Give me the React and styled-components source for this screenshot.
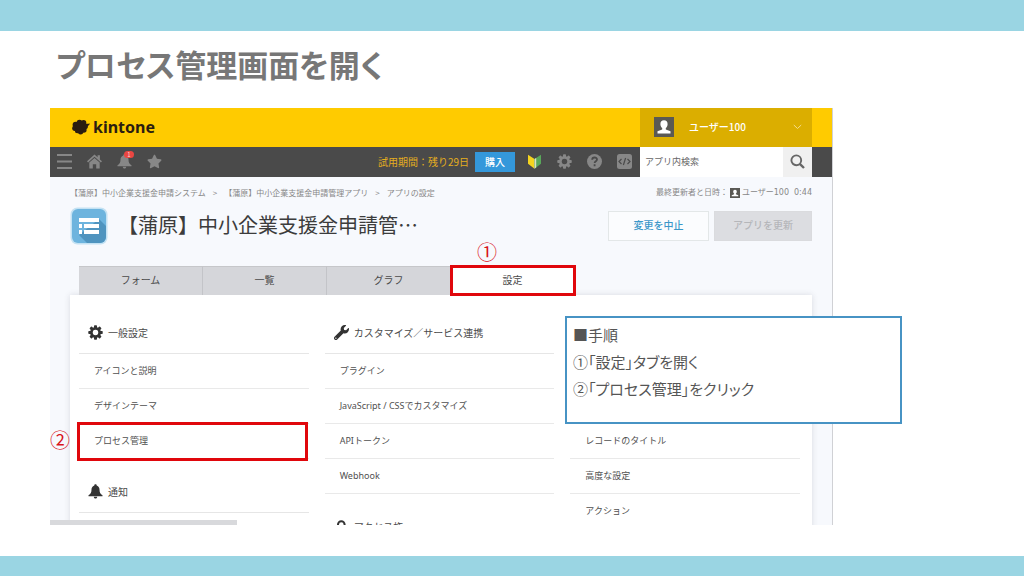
import React from "react";
import styled, { createGlobalStyle, css } from "styled-components";
import { FaStar, FaWrench } from "react-icons/fa";

const GlobalStyle = createGlobalStyle`
  * { box-sizing: border-box; }
  body { margin: 0; background: #fff; color: #4a4a4a; font-family: "Noto Sans CJK JP", sans-serif; }
  button, input { font-family: inherit; }
  h1, h2, h3, p, ul { margin: 0; padding: 0; }
  ul { list-style: none; }
  a { color: inherit; text-decoration: none; }
  svg { display: block; flex: none; }
`;

const Slide = styled.main`
  display: flex;
  flex-direction: column;
  height: 100vh;
  overflow: hidden;
`;
const Band = styled.div`
  flex: none;
  height: ${(p) => p.$size}px;
  background: #9ad5e3;
`;
const SlideTitle = styled.h1`
  flex: none;
  padding: 8px 56px 19px;
  font-size: 31px;
  line-height: 50px;
  font-weight: 700;
  font-feature-settings: "palt";
  color: #777;
`;
const Stage = styled.section`
  position: relative;
  flex: 1;
  min-height: 0;
  margin: 0 191px 31px 50px;
`;
const Shot = styled.div`
  position: relative;
  display: flex;
  flex-direction: column;
  height: 100%;
  overflow: hidden;
  background: #f7f9fd;
  border-right: 1px solid #d0d1d5;
`;

const Brand = styled.header`
  display: flex;
  flex: none;
  align-items: center;
  height: 39px;
  padding: 0 20px 0 22px;
  background: #ffcb00;
`;
const Logo = styled.a`
  display: flex;
  align-items: center;
  gap: 3px;
  margin-right: auto;
  padding-bottom: 1px;
  font: 700 16px/20px "Noto Sans", sans-serif;
  color: #2b1d10;
`;
const UserMenu = styled.button`
  display: flex;
  align-items: center;
  width: 172px;
  height: 39px;
  padding: 0 10px 2px 14px;
  border: 0;
  background: #dbae00;
  color: #fff;
  font-size: 10px;
  font-weight: 500;
  text-align: left;
  span { flex: 1; padding-left: 15px; }
`;

const Nav = styled.nav`
  display: flex;
  flex: none;
  align-items: center;
  height: 30px;
  padding: 0 20px 0 7px;
  background: #4a4a4a;
`;
const IconGroup = styled.div`
  display: flex;
  align-items: center;
  gap: 15px;
  margin-right: ${(p) => (p.$push ? "auto" : "8px")};
`;
const IconButton = styled.button`
  position: relative;
  display: grid;
  place-items: center;
  width: 15px;
  height: 20px;
  padding: 0 0 1px;
  border: 0;
  background: none;
  color: #878787;
`;
const Badge = styled.span`
  position: absolute;
  top: -1px;
  right: -2px;
  width: 10px;
  height: 7px;
  border-radius: 4px;
  background: #ea4642;
  color: #ffd9d5;
  font-size: 6px;
  line-height: 7px;
  text-align: center;
`;
const Trial = styled.span`
  padding-bottom: 2px;
  font-size: 10px;
  color: #e5ae1e;
`;
const BuyButton = styled.button`
  width: 40px;
  height: 20px;
  margin: 0 12px 0 6px;
  padding: 0 0 1px;
  border: 0;
  background: #3498db;
  color: #fff;
  font-size: 10px;
  font-weight: 500;
`;
const Search = styled.form`
  display: flex;
  width: 172px;
  height: 30px;
  input {
    flex: 1;
    min-width: 0;
    padding: 0 5px 2px;
    border: 0;
    border-radius: 0;
    background: #fff;
    font-size: 9px;
  }
  input::placeholder { color: #666; opacity: 1; }
  button {
    display: grid;
    place-items: center;
    width: 29px;
    padding: 0 0 1px;
    border: 0;
    background: #f0f0f0;
    color: #666;
  }
`;

const Page = styled.div`
  display: flex;
  flex: 1;
  flex-direction: column;
  min-height: 0;
  padding: 10px 20px 0;
`;
const MetaRow = styled.div`
  display: flex;
  flex: none;
  justify-content: space-between;
  height: 12px;
  font-size: 8px;
  line-height: 12px;
  color: #888;
`;
const Crumbs = styled.nav`
  display: flex;
  gap: 7px;
`;
const Updated = styled.div`
  display: flex;
  align-items: center;
  gap: 2px;
  font-family: "DejaVu Sans", "Noto Sans CJK JP", sans-serif;
  time { margin-left: 3px; }
`;
const AppHead = styled.div`
  display: flex;
  flex: none;
  align-items: center;
  height: 38px;
  margin: 8px 0 21px;
`;
const AppName = styled.h2`
  flex: 1;
  padding: 0 0 3px 10px;
  font-size: 20px;
  line-height: 34px;
  font-weight: 400;
  color: #3c3c3c;
`;
const ActionButton = styled.button`
  width: ${(p) => (p.$muted ? 98 : 101)}px;
  height: 30px;
  margin-left: 5px;
  padding: 0 0 3px;
  border: 1px solid ${(p) => (p.$muted ? "#dadbde" : "#e3e7e8")};
  background: ${(p) => (p.$muted ? "#dcdde1" : "#fbfcfe")};
  color: ${(p) => (p.$muted ? "#b5b6ba" : "#3a97c9")};
  font-size: 10px;
  font-weight: 500;
`;

const callout = css`
  &::after {
    content: "";
    position: absolute;
    inset: ${(p) => p.$inset};
    border: 3px solid #e0070c;
    pointer-events: none;
  }
`;
const Marker = styled.span`
  position: absolute;
  left: ${(p) => p.$left}px;
  top: ${(p) => p.$top}px;
  color: #d8141b;
  font-size: 20px;
  line-height: 24px;
  font-weight: 400;
`;
const Tabs = styled.div`
  position: relative;
  z-index: 1;
  display: flex;
  flex: none;
  height: 29px;
  padding-left: 9px;
`;
const Tab = styled.button`
  position: relative;
  width: 124px;
  padding: 0 0 3px;
  border: 0;
  border-top: 1px solid #c6c7ca;
  border-right: 1px solid #c3c4c8;
  background: ${(p) => (p.$active ? "#fff" : "#d5d6da")};
  color: #4a4a4a;
  font-size: 10px;
  ${(p) => p.$active && callout}
`;
const Panel = styled.div`
  display: grid;
  flex: 1;
  grid-template-columns: repeat(3, 1fr);
  gap: 16px;
  padding: 16px 12px 0 9px;
  background: #fff;
  box-shadow: 0 0 6px rgba(60, 64, 80, 0.16);
`;
const Group = styled.section`
  margin-bottom: 11px;
`;
const GroupTitle = styled.h3`
  display: flex;
  align-items: center;
  gap: 5px;
  height: 43px;
  padding-left: 9px;
  border-bottom: 1px solid #e6e6e6;
  font-size: 10px;
  font-weight: 400;
  color: #4a4a4a;
  svg { color: #333; }
`;
const Item = styled.li`
  position: relative;
  height: 35px;
  padding-left: 15px;
  border-bottom: 1px solid #e9e9e9;
  font: 400 9px/34px "Noto Sans", "Noto Sans CJK JP", sans-serif;
  color: #505050;
  ${(p) => p.$marked && callout}
`;
const StatusBar = styled.div`
  position: absolute;
  left: 0;
  bottom: 0;
  width: 187px;
  height: 5px;
  background: #d8d9dc;
`;
const Note = styled.aside`
  position: absolute;
  top: 208px;
  right: -69px;
  width: 337px;
  height: 108px;
  padding: 3px 6px;
  border: 2px solid #4793c4;
  background: #fff;
  color: #555;
  font-size: 15px;
  line-height: 27px;
  font-feature-settings: "palt";
`;

const Gear = ({ size = 15 }) => (
  <svg width={size} height={size} viewBox="0 0 16 16" fill="currentColor" aria-hidden="true">
    {[0, 45, 90, 135].map((a) => (
      <rect key={a} x="6.4" y="0.3" width="3.2" height="15.4" rx="0.8" transform={`rotate(${a} 8 8)`} mask="url(#hub)" />
    ))}
    <mask id="hub" maskUnits="userSpaceOnUse" x="-4" y="-4" width="24" height="24">
      <path d="M-4-4h24v24h-24z" fill="#fff" />
      <circle cx="8" cy="8" r="3.2" fill="#000" />
    </mask>
    <circle cx="8" cy="8" r="4.5" fill="none" stroke="currentColor" strokeWidth="2.6" />
  </svg>
);
const Bell = ({ size = 15 }) => (
  <svg width={size} height={size} viewBox="0 0 15 15" fill="currentColor" aria-hidden="true">
    <path d="M7.5 0.2c.8 0 1.2.5 1.2 1.2 2 .7 2.8 2.3 2.8 4.2 0 3 .8 4.3 3 5.7v1H.5v-1c2.200-1.400 3-2.700 3-5.700 0-1.900.8-3.500 2.800-4.200 0-.7.4-1.200 1.200-1.200z" />
    <path d="M5.800 12.700h3.400c0 1-.7 1.900-1.700 1.900s-1.700-.9-1.700-1.900z" />
  </svg>
);
const Home = () => (
  <svg width="15" height="15" viewBox="0 0 15 15" fill="currentColor" aria-hidden="true">
    <path d="M7.500 0.500 0 7.300l1.100 1.200L7.500 2.800l6.400 5.700L15 7.300 12.900 5.400V1.200h-2.300v2.100z" />
    <path d="M2.300 8.500 7.500 4l5.200 4.500v6H9.200v-4.300H5.800v4.300H2.300z" />
  </svg>
);
const Menu = () => (
  <svg width="15" height="15" viewBox="0 0 15 15" aria-hidden="true">
    <path d="M0 1h15M0 7.500h15M0 14h15" stroke="currentColor" strokeWidth="2" />
  </svg>
);
const Person = ({ size }) => (
  <svg width={size} height={size} viewBox="0 0 20 20" aria-hidden="true">
    <path d="M0 0h20v20H0z" fill="#5a5954" />
    <path d="M10 3.300c2.300 0 3.700 1.600 3.600 4-.1 1.900-.8 3-1.800 3.800v1.500l4.700 1.700v2.200h-13v-2.200l4.700-1.700v-1.500c-1-.8-1.700-1.900-1.800-3.800-.1-2.400 1.300-4 3.600-4z" fill="#fff" />
  </svg>
);
const Cloud = () => (
  <svg width="18" height="16" viewBox="0 0 18 16" fill="#2b1d10" aria-hidden="true">
    <circle cx="3.600" cy="5.800" r="3" />
    <circle cx="2.900" cy="9.300" r="2.700" />
    <circle cx="7.500" cy="3.700" r="2.900" />
    <circle cx="11.600" cy="3.700" r="2.700" />
    <circle cx="13.200" cy="7.500" r="2.700" />
    <circle cx="11.800" cy="11" r="2.800" />
    <circle cx="8.600" cy="12.700" r="2.700" />
    <circle cx="5.400" cy="11.700" r="2.500" />
    <circle cx="8.200" cy="8" r="4.600" />
    <path d="M13 4.600c1.700.3 3.200.2 4.900-.2-.5 1.500-1.500 2.400-3 3z" />
  </svg>
);
const Leaf = () => (
  <svg width="13" height="15" viewBox="0 0 13 15" aria-hidden="true">
    <path d="M0 .8 6.500 5v9.800L0 9.700z" fill="#f5d41f" />
    <path d="M13 .8 6.500 5v9.800l6.500-5.100z" fill="#59a75a" />
    <path d="M8.200 3.900v9.600l-1.700 1.300V5z" fill="#d9e3c4" />
  </svg>
);
const Help = () => (
  <svg width="15" height="15" viewBox="0 0 15 15" aria-hidden="true">
    <circle cx="7.500" cy="7.500" r="7.500" fill="currentColor" />
    <path d="M5.200 5.800c0-3 4.800-3 4.800-.3 0 1.700-2.400 1.800-2.400 3.600M7.600 10.300v1.900" fill="none" stroke="#4a4a4a" strokeWidth="1.800" />
  </svg>
);
const Code = () => (
  <svg width="15" height="15" viewBox="0 0 15 15" aria-hidden="true">
    <rect width="15" height="15" rx="2.500" fill="currentColor" />
    <path d="M4.500 5 2 7.500 4.500 10M10.500 5 13 7.500 10.500 10M8.600 4 6.400 11" fill="none" stroke="#4a4a4a" strokeWidth="1.200" />
  </svg>
);
const Glass = () => (
  <svg width="15" height="15" viewBox="0 0 15 15" fill="none" stroke="currentColor" aria-hidden="true">
    <circle cx="6.300" cy="6.300" r="4.900" strokeWidth="1.900" />
    <path d="m9.800 9.800 4.200 4.200" strokeWidth="2.400" />
  </svg>
);
const Chevron = () => (
  <svg width="9" height="6" viewBox="0 0 9 6" fill="none" stroke="#f3dc8c" aria-hidden="true">
    <path d="m.8 1 3.700 3.500L8.200 1" />
  </svg>
);
const Lock = () => (
  <svg width="15" height="15" viewBox="0 0 15 15" aria-hidden="true">
    <path d="M4 9V5.500a3.300 3.300 0 0 1 6.600 0V9" fill="none" stroke="currentColor" strokeWidth="2" />
    <rect x="2.500" y="8" width="9.600" height="6.500" fill="currentColor" />
  </svg>
);
const AppIcon = () => (
  <svg width="38" height="38" viewBox="0 0 38 38" aria-hidden="true">
    <rect x=".5" y=".5" width="37" height="37" rx="7" fill="#c4e2f3" />
    <rect x="2" y="2" width="34" height="34" rx="6" fill="#6db4de" />
    <path d="M29 12 36 19v11a6 6 0 0 1-6 6H17L9 28z" fill="#4f94bf" />
    <path d="M9 11h20v4H9zM9 17h3v4H9zM14 17h15v4H14zM9 23h3v4H9zM14 23h15v4H14z" fill="#fff" />
  </svg>
);

const icons = {
  gear: <Gear />,
  bell: <Bell />,
  wrench: <FaWrench size={15} />,
  lock: <Lock />,
};
const columns = [
  [
    { title: "一般設定", icon: "gear", items: ["アイコンと説明", "デザインテーマ", "プロセス管理"] },
    { title: "通知", icon: "bell", items: [] },
  ],
  [
    {
      title: "カスタマイズ／サービス連携",
      icon: "wrench",
      items: ["プラグイン", "JavaScript / CSSでカスタマイズ", "APIトークン", "Webhook"],
    },
    { title: "アクセス権", icon: "lock", items: [] },
  ],
  [{ title: "", items: ["", "", "レコードのタイトル", "高度な設定", "アクション"] }],
];

export default function App() {
  return (
    <Slide>
      <GlobalStyle />
      <Band $size={31} />
      <SlideTitle>プロセス管理画面を開く</SlideTitle>
      <Stage>
        <Shot>
          <Brand>
            <Logo href="#"><Cloud />kintone</Logo>
            <UserMenu><Person size={20} /><span>ユーザー100</span><Chevron /></UserMenu>
          </Brand>
          <Nav>
            <IconGroup $push>
              <IconButton aria-label="メニュー"><Menu /></IconButton>
              <IconButton aria-label="ホーム"><Home /></IconButton>
              <IconButton aria-label="通知"><Bell /><Badge>1</Badge></IconButton>
              <IconButton aria-label="お気に入り"><FaStar size={15} /></IconButton>
            </IconGroup>
            <Trial>試用期間：残り29日</Trial>
            <BuyButton>購入</BuyButton>
            <IconGroup>
              <IconButton aria-label="はじめに"><Leaf /></IconButton>
              <IconButton aria-label="設定"><Gear /></IconButton>
              <IconButton aria-label="ヘルプ"><Help /></IconButton>
              <IconButton aria-label="開発者"><Code /></IconButton>
            </IconGroup>
            <Search>
              <input aria-label="アプリ内検索" placeholder="アプリ内検索" />
              <button type="button" aria-label="検索"><Glass /></button>
            </Search>
          </Nav>
          <Page>
            <MetaRow>
              <Crumbs>
                <a href="#">【蒲原】中小企業支援金申請システム</a>
                <span>&gt;</span>
                <a href="#">【蒲原】中小企業支援金申請管理アプリ</a>
                <span>&gt;</span>
                <span>アプリの設定</span>
              </Crumbs>
              <Updated>
                <span>最終更新者と日時：</span>
                <Person size={10} />
                <a href="#">ユーザー100</a>
                <time>0:44</time>
              </Updated>
            </MetaRow>
            <AppHead>
              <AppIcon />
              <AppName>【蒲原】中小企業支援金申請管…</AppName>
              <ActionButton>変更を中止</ActionButton>
              <ActionButton $muted>アプリを更新</ActionButton>
            </AppHead>
            <Tabs>
              <Tab>フォーム</Tab>
              <Tab>一覧</Tab>
              <Tab>グラフ</Tab>
              <Tab $active $inset="-2px -2px -1px -1px">
                設定
                <Marker $left={26} $top={-27}>①</Marker>
              </Tab>
            </Tabs>
            <Panel>
              {columns.map((groups, c) => (
                <div key={c}>
                  {groups.map((g) => (
                    <Group key={g.title}>
                      <GroupTitle>{icons[g.icon]}{g.title}</GroupTitle>
                      <ul>
                        {g.items.map((t, i) => {
                          const marked = t === "プロセス管理";
                          return (
                            <Item key={i} $marked={marked} $inset="-2px 1px -3px -2px">
                              {t && <a href="#">{t}</a>}
                              {marked && <Marker $left={-29} $top={5}>②</Marker>}
                            </Item>
                          );
                        })}
                      </ul>
                    </Group>
                  ))}
                </div>
              ))}
            </Panel>
          </Page>
          <StatusBar />
        </Shot>
        <Note>
          <p>■手順</p>
          <p>①「設定」タブを開く</p>
          <p>②「プロセス管理」をクリック</p>
        </Note>
      </Stage>
      <Band $size={20} />
    </Slide>
  );
}
